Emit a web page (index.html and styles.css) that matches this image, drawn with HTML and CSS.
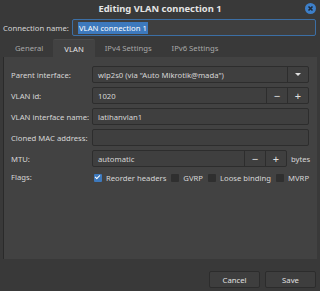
FILE: index.html
```html
<!DOCTYPE html>
<html>
<head>
    <title>Editing VLAN connection 1</title>
    <link rel="stylesheet" href="styles.css">
</head>
<body>
    <div class="dialog">
        <div class="titlebar">
            <span></span>
            <span class="title">Editing VLAN connection 1</span>
            <span class="close">
                <svg width="11" height="11" viewBox="0 0 11 11">
                    <circle cx="5.5" cy="5.5" r="5.5" fill="#3d7fc9"/>
                    <path d="M3.5 3.5 L7.5 7.5 M7.5 3.5 L3.5 7.5" stroke="#1d2a3a" stroke-width="1.6"/>
                </svg>
            </span>
        </div>

        <div class="name-row">
            <label>Connection name:</label>
            <div class="entry focus"><span class="selected">VLAN connection 1</span></div>
        </div>

        <div class="tabs">
            <div class="tab first">General</div>
            <div class="tab active">VLAN</div>
            <div class="tab ipv4">IPv4 Settings</div>
            <div class="tab">IPv6 Settings</div>
        </div>

        <div class="panel">
            <div class="form">
                <label>Parent interface:</label>
                <div class="entry combo">
                    <span class="value">wlp2s0 (via "Auto Mikrotik@mada")</span>
                    <span class="side-btn"><span class="arrow"></span></span>
                </div>

                <label>VLAN id:</label>
                <div class="entry">
                    <span class="value">1020</span>
                    <span class="side-btn">&minus;</span>
                    <span class="side-btn">+</span>
                </div>

                <label>VLAN interface name:</label>
                <div class="entry"><span class="value">latihanvlan1</span></div>

                <label>Cloned MAC address:</label>
                <div class="entry"><span class="value"></span></div>

                <label>MTU:</label>
                <div class="mtu">
                    <div class="entry">
                        <span class="value">automatic</span>
                        <span class="side-btn">&minus;</span>
                        <span class="side-btn">+</span>
                    </div>
                    <span class="unit">bytes</span>
                </div>

                <label>Flags:</label>
                <div class="flags">
                    <span class="check on"></span><span class="flag-text">Reorder headers</span>
                    <span class="check"></span><span class="flag-text">GVRP</span>
                    <span class="check"></span><span class="flag-text">Loose binding</span>
                    <span class="check"></span><span class="flag-text">MVRP</span>
                </div>
            </div>
        </div>

        <div class="buttons">
            <button class="button">Cancel</button>
            <button class="button">Save</button>
        </div>
    </div>
</body>
</html>
```

FILE: styles.css
```css
body {
    margin: 0;
    padding: 0;
    background-color: #393939;
    color: #d6d6d6;
    font-family: "Noto Sans", "Open Sans", sans-serif;
    font-size: 7.7px;
    overflow: hidden;
}
.dialog {
    width: 320px;
    height: 291px;
    display: flex;
    flex-direction: column;
}
.titlebar {
    height: 17px;
    display: grid;
    grid-template-columns: 20px 1fr 20px;
    align-items: center;
    background-color: #393939;
}
.title {
    text-align: center;
    font-weight: bold;
    font-size: 9.4px;
    color: #e4e4e4;
}
.close {
    display: flex;
    justify-content: center;
    padding-left: 1px;
}
.close svg {
    display: block;
}
.name-row {
    display: flex;
    align-items: center;
    padding: 2px 4px 0 3px;
    gap: 9px;
}
.name-row label {
    width: 60px;
    white-space: nowrap;
}
.entry {
    flex: 1;
    min-width: 0;
    height: 17px;
    box-sizing: border-box;
    display: flex;
    align-items: stretch;
    background-color: #3f3f3f;
    border: 1px solid #2d2d2d;
    border-radius: 2px;
}
.entry.focus {
    border-color: #3c6fa5;
    align-items: center;
    padding-left: 5px;
}
.selected {
    background-color: #3d79bd;
    color: #fff;
    padding: 1px 1px;
}
.value {
    flex: 1;
    display: flex;
    align-items: center;
    padding-left: 5px;
    white-space: nowrap;
    overflow: hidden;
}
.side-btn {
    width: 20px;
    display: flex;
    align-items: center;
    justify-content: center;
    border-left: 1px solid #2d2d2d;
    font-size: 11px;
    color: #e0e0e0;
}
.arrow {
    width: 0;
    height: 0;
    border-left: 3px solid transparent;
    border-right: 3px solid transparent;
    border-top: 3px solid #e0e0e0;
}
.tabs {
    display: flex;
    padding: 3px 0 0 4px;
    height: 18px;
}
.tab {
    padding: 0 10px;
    display: flex;
    align-items: center;
    color: #a8a8a8;
    white-space: nowrap;
}
.tab.first { padding: 0 10px 0 11px; }
.tab.ipv4 { padding: 0 10px 0 10px; }
.tab.active {
    background-color: #424242;
    color: #e4e4e4;
    padding: 0 11px;
    border-radius: 2px 2px 0 0;
    border-top: 1px solid #4a4a4a;
}
.panel {
    margin: 0 3px 0 3px;
    height: 202px;
    box-sizing: border-box;
    background-color: #424242;
    border-left: 1px solid #2a2a2a;
    padding: 9px 8px 0 7px;
}
.form {
    display: grid;
    grid-template-columns: 81px minmax(0, 1fr);
    row-gap: 4px;
    align-items: center;
}
.form label {
    white-space: nowrap;
}
.mtu {
    display: flex;
    align-items: center;
    gap: 4px;
}
.unit {
    width: 18px;
}
.flags {
    display: flex;
    align-items: center;
    padding: 2px 0 0 2px;
    white-space: nowrap;
}
.check {
    flex: none;
    width: 8px;
    height: 8px;
    box-sizing: border-box;
    border-radius: 1px;
    background-color: #2f2f2f;
    margin-right: 4px;
    position: relative;
}
.check.on {
    background-color: #3d79bd;
}
.check.on::after {
    content: "";
    position: absolute;
    left: 2px;
    top: 0px;
    width: 2px;
    height: 4px;
    border-right: 1px solid #fff;
    border-bottom: 1px solid #fff;
    transform: rotate(45deg);
}
.flag-text {
    margin-right: 5px;
}
.buttons {
    display: flex;
    justify-content: flex-end;
    gap: 5px;
    padding: 12px 4px 0 0;
}
.button {
    width: 51px;
    height: 17px;
    background-color: #3e3e3e;
    color: #e0e0e0;
    border: 1px solid #2c2c2c;
    border-radius: 2px;
    font-family: inherit;
    font-size: 7.7px;
    padding: 0;
}
```
